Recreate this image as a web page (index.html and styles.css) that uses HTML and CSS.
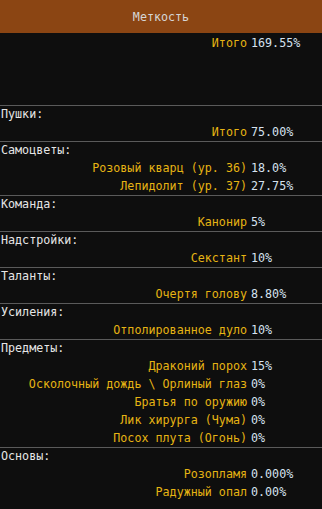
FILE: index.html
```html
<!DOCTYPE html>
<html lang="ru">
<head>
  <meta charset="UTF-8">
  <meta name="viewport" content="width=device-width, initial-scale=1">
  <title>Меткость</title>
  <link rel="stylesheet" href="styles.css">
</head>
<body>

  <div class="header">Меткость</div>

  <div class="total">
    <div class="row"><span class="label">Итого</span><span class="value">169.55%</span></div>
  </div>

  <div class="section">
    <div class="title">Пушки:</div>
    <div class="row"><span class="label">Итого</span><span class="value">75.00%</span></div>
  </div>

  <div class="section">
    <div class="title">Самоцветы:</div>
    <div class="row"><span class="label">Розовый кварц (ур. 36)</span><span class="value">18.0%</span></div>
    <div class="row"><span class="label">Лепидолит (ур. 37)</span><span class="value">27.75%</span></div>
  </div>

  <div class="section">
    <div class="title">Команда:</div>
    <div class="row"><span class="label">Канонир</span><span class="value">5%</span></div>
  </div>

  <div class="section">
    <div class="title">Надстройки:</div>
    <div class="row"><span class="label">Секстант</span><span class="value">10%</span></div>
  </div>

  <div class="section">
    <div class="title">Таланты:</div>
    <div class="row"><span class="label">Очертя голову</span><span class="value">8.80%</span></div>
  </div>

  <div class="section">
    <div class="title">Усиления:</div>
    <div class="row"><span class="label">Отполированное дуло</span><span class="value">10%</span></div>
  </div>

  <div class="section">
    <div class="title">Предметы:</div>
    <div class="row"><span class="label">Драконий порох</span><span class="value">15%</span></div>
    <div class="row"><span class="label">Осколочный дождь \ Орлиный глаз</span><span class="value">0%</span></div>
    <div class="row"><span class="label">Братья по оружию</span><span class="value">0%</span></div>
    <div class="row"><span class="label">Лик хирурга (Чума)</span><span class="value">0%</span></div>
    <div class="row"><span class="label">Посох плута (Огонь)</span><span class="value">0%</span></div>
  </div>

  <div class="section">
    <div class="title">Основы:</div>
    <div class="row"><span class="label">Розопламя</span><span class="value">0.000%</span></div>
    <div class="row"><span class="label">Радужный опал</span><span class="value">0.00%</span></div>
  </div>

</body>
</html>
```

FILE: styles.css
```css
body {
  margin: 0;
  padding: 0;
  background-color: #0e0e0e;
  color: #e6e6e6;
  font-family: 'DejaVu Sans Mono', 'Liberation Mono', monospace;
  font-size: 11.7px;
  overflow: hidden;
}

.header {
  background-color: #8b4513;
  color: #d6d6d6;
  height: 33px;
  display: flex;
  align-items: center;
  justify-content: center;
}

.total {
  height: 72px;
  padding-top: 1px;
  box-sizing: border-box;
}

.section {
  border-top: 1px solid #5a5a5a;
}

.title {
  height: 17px;
  line-height: 17px;
  padding-left: 1px;
}

.row {
  display: grid;
  grid-template-columns: 247px auto;
  column-gap: 4px;
  height: 18px;
  line-height: 18px;
}

.label {
  text-align: right;
  color: #e6b413;
  white-space: nowrap;
}

.value {
  color: #d6e2f0;
  white-space: nowrap;
}
```
